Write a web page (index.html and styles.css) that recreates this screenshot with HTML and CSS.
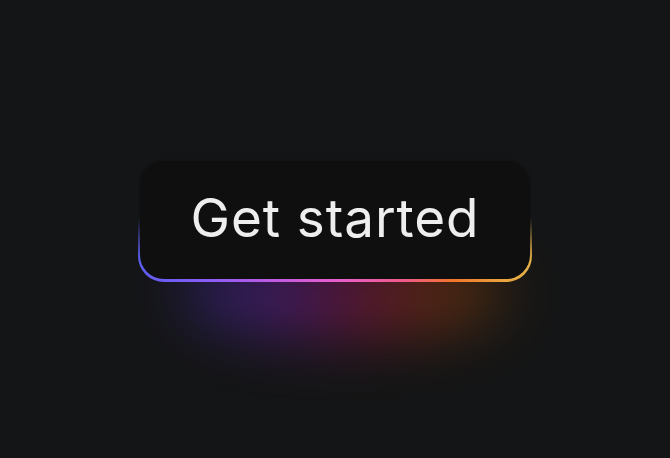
FILE: index.html
```html
<!DOCTYPE html>
<html lang="en">
<head>
<meta charset="utf-8">
<title>Get started</title>
<link rel="stylesheet" href="styles.css">
</head>
<body>
  <main class="stage">
    <div class="glow-btn">
      <span class="glow" aria-hidden="true"></span>
      <button class="btn-frame" type="button">
        <span class="btn-inner">Get started</span>
      </button>
    </div>
  </main>
</body>
</html>
```
FILE: styles.css
```css
html, body {
  margin: 0;
  height: 100%;
  background: #141516;
}
.stage {
  height: 100%;
  display: flex;
  align-items: center;
  justify-content: center;
  padding-bottom: 18px;
  box-sizing: border-box;
}
.glow-btn {
  position: relative;
  width: 394px;
  height: 123px;
}
.glow {
  position: absolute;
  left: 45px;
  right: 30px;
  top: 100px;
  height: 80px;
  border-radius: 30% 30% 50% 50%;
  background: linear-gradient(90deg, #4338ca 0%, #7e22ce 30%, #be185d 55%, #c2410c 78%, #a16207 100%);
  filter: blur(30px);
  opacity: 0.42;
}
.btn-frame {
  position: relative;
  display: flex;
  width: 100%;
  height: 100%;
  padding: 2px 2px 3px 2px;
  border: 0;
  border-radius: 26px;
  box-sizing: border-box;
  background:
    linear-gradient(180deg, #121314 0%, #121314 48%, rgba(18,19,20,0) 82%),
    linear-gradient(90deg, #5b5ef0 0%, #8b5cf6 18%, #c55be0 36%, #e95fc9 52%, #ef5a86 68%, #f1762c 80%, #eaa53e 93%, #e2b04a 100%);
  cursor: pointer;
}
.btn-inner {
  flex: 1;
  display: flex;
  align-items: center;
  justify-content: center;
  border-radius: 24px;
  background: #0f0f10;
  color: #eeeeee;
  font-family: Inter, "Noto Sans", sans-serif;
  font-weight: 400;
  font-size: 53px;
  letter-spacing: 0.9px;
  padding-bottom: 4px;
}
```
